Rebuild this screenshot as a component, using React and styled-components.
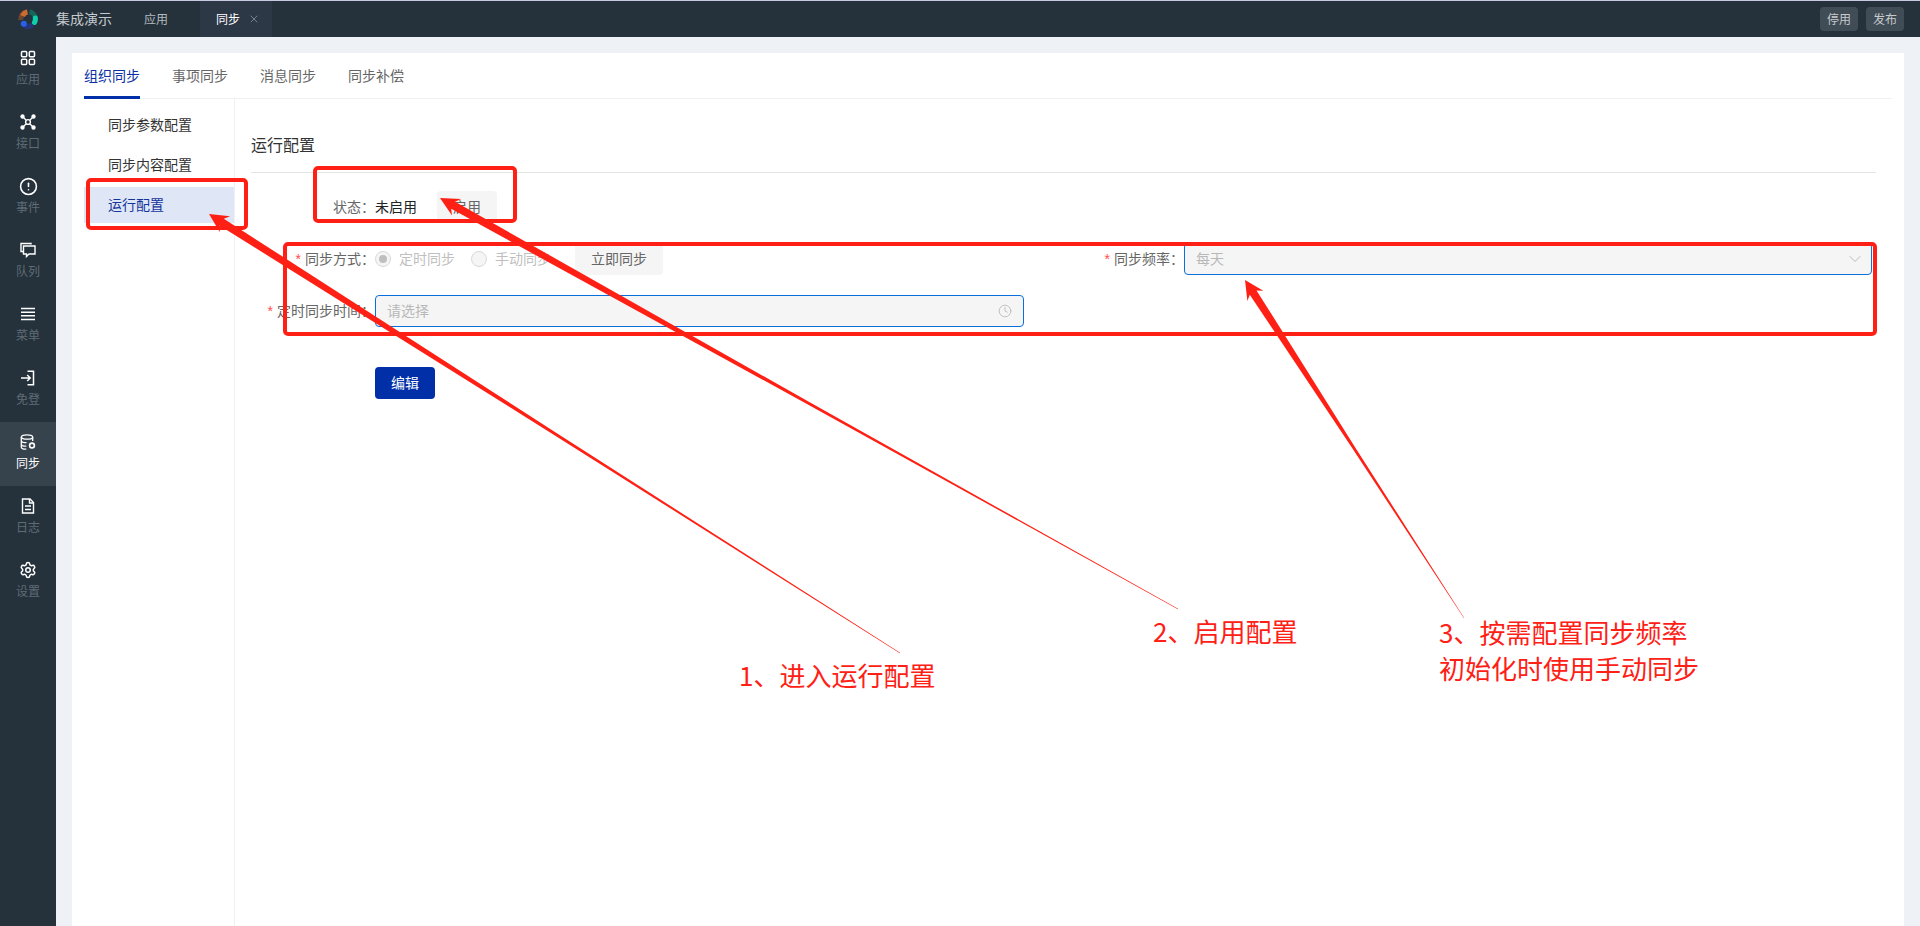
import React from 'react';
import styled, { createGlobalStyle } from 'styled-components';
import { ChevronDown, CircleAlert, Clock, Settings, X } from 'lucide-react';

const GlobalStyle = createGlobalStyle`
  html, body {
    margin: 0;
    padding: 0;
    background: #eef1f5;
  }
  body {
    font-family: "Noto Sans CJK SC", "Noto Sans", sans-serif;
    font-size: 14px;
    color: #333;
  }
  * {
    box-sizing: border-box;
  }
`;

const Page = styled.div`
  position: relative;
  display: flex;
  flex-direction: column;
  width: 1920px;
  height: 926px;
  overflow: hidden;
`;

const TopBar = styled.header`
  display: flex;
  align-items: stretch;
  height: 37px;
  flex-shrink: 0;
  padding-left: 18px;
  padding-right: 16px;
  background: #25323c;
  border-top: 1px solid #c9c9e2;
`;

const Logo = styled.svg`
  align-self: center;
  width: 20px;
  height: 20px;
  margin-right: 18px;
`;

const AppTitle = styled.div`
  display: flex;
  align-items: center;
  width: 56px;
  margin-right: 16px;
  padding-bottom: 2px;
  font-size: 14px;
  color: #c6cacd;
`;

const TopTab = styled.div`
  display: flex;
  align-items: center;
  gap: 8px;
  margin-right: 16px;
  padding: 0 ${(p) => (p.$active ? '12px' : '16px')} 1px 16px;
  font-size: 12px;
  color: ${(p) => (p.$active ? '#fff' : '#b4babe')};
  background: ${(p) => (p.$active ? '#2c3846' : 'transparent')};
  svg {
    color: #77818a;
  }
`;

const TopActions = styled.div`
  display: flex;
  align-items: center;
  gap: 8px;
  margin-left: auto;
`;

const TopButton = styled.div`
  display: flex;
  align-items: center;
  justify-content: center;
  width: 38px;
  height: 24px;
  padding-bottom: 1px;
  font-size: 12px;
  color: #c6cacd;
  background: #414d56;
  border-radius: 4px;
`;

const Layout = styled.div`
  display: flex;
  flex: 1;
  min-height: 0;
`;

const Sidebar = styled.nav`
  display: flex;
  flex-direction: column;
  width: 56px;
  flex-shrink: 0;
  padding-top: 1px;
  background: #25323c;
`;

const NavItem = styled.div`
  display: flex;
  flex-direction: column;
  align-items: center;
  height: 64px;
  padding-top: 12px;
  color: #fff;
  background: ${(p) => (p.$active ? '#36424c' : 'transparent')};
`;

const NavIcon = styled.span`
  display: flex;
  align-items: center;
  justify-content: center;
  width: 16px;
  height: 16px;
  svg {
    flex-shrink: 0;
  }
  svg:not(.lucide) {
    width: 16px;
    height: 16px;
  }
`;

const NavLabel = styled.span`
  margin-top: 5px;
  font-size: 12px;
  line-height: 16px;
  color: ${(p) => (p.$active ? '#fff' : '#5f6b74')};
`;

const Main = styled.main`
  flex: 1;
  min-width: 0;
  padding: 16px 16px 0;
`;

const Card = styled.section`
  display: flex;
  flex-direction: column;
  height: 100%;
  padding: 0 12px;
  background: #fff;
`;

const Tabs = styled.div`
  display: flex;
  gap: 32px;
  height: 46px;
  flex-shrink: 0;
  border-bottom: 1px solid #f0f0f0;
`;

const Tab = styled.div`
  position: relative;
  display: flex;
  align-items: center;
  height: 46px;
  padding-bottom: 2px;
  font-size: 14px;
  color: ${(p) => (p.$active ? '#0b2fa3' : '#666')};
  &::after {
    content: '';
    display: ${(p) => (p.$active ? 'block' : 'none')};
    position: absolute;
    left: 0;
    right: 0;
    bottom: 0;
    height: 3px;
    background: #002fa7;
  }
`;

const Content = styled.div`
  display: flex;
  flex: 1;
  min-height: 0;
`;

const SideMenu = styled.ul`
  display: flex;
  flex-direction: column;
  gap: 4px;
  width: 151px;
  flex-shrink: 0;
  margin: 0;
  padding: 8px 0 0;
  list-style: none;
  border-right: 1px solid #f0f0f0;
`;

const SideMenuItem = styled.li`
  display: flex;
  align-items: center;
  height: 36px;
  padding: 0 0 2px 24px;
  font-size: 14px;
  color: ${(p) => (p.$active ? '#15359d' : '#333')};
  background: ${(p) => (p.$active ? '#dfe7f6' : 'transparent')};
`;

const Pane = styled.div`
  flex: 1;
  min-width: 0;
  padding: 0 16px;
`;

const PaneTitle = styled.h2`
  margin: 0 0 18px;
  padding: 33px 0 16px;
  font-size: 16px;
  font-weight: 400;
  line-height: 24px;
  color: #333;
  border-bottom: 1px solid #e4e4e4;
`;

const FormRow = styled.div`
  display: grid;
  grid-template-columns: 773px 812px;
  column-gap: 36px;
  margin-bottom: 20px;
`;

const Field = styled.div`
  display: flex;
  align-items: center;
  height: 32px;
`;

const Label = styled.label`
  display: block;
  width: 124px;
  flex-shrink: 0;
  padding-bottom: 2px;
  text-align: right;
  color: #666;
  white-space: nowrap;
`;

const Required = styled.span`
  margin-right: 4px;
  font-family: "Liberation Sans", sans-serif;
  color: #ff4d4f;
`;

const StatusValue = styled.span`
  padding-bottom: 2px;
  color: #222;
`;

const GhostButton = styled.div`
  display: flex;
  align-items: center;
  justify-content: center;
  width: ${(p) => p.$width}px;
  height: 32px;
  margin-left: ${(p) => p.$gap}px;
  padding-bottom: 2px;
  color: #666;
  background: #f5f5f5;
  border-radius: 4px;
`;

const RadioOption = styled.div`
  display: flex;
  align-items: center;
  gap: 8px;
  margin-right: 16px;
  padding-bottom: 2px;
  color: #bfbfbf;
`;

const RadioDot = styled.span`
  display: flex;
  align-items: center;
  justify-content: center;
  width: 16px;
  height: 16px;
  margin-top: 2px;
  background: #f5f5f5;
  border: 1px solid #d9d9d9;
  border-radius: 50%;
  &::after {
    content: '';
    display: ${(p) => (p.$checked ? 'block' : 'none')};
    width: 8px;
    height: 8px;
    background: #bfbfbf;
    border-radius: 50%;
  }
`;

const Control = styled.div`
  display: flex;
  flex: 1;
  align-items: center;
  justify-content: space-between;
  height: 32px;
  padding: 0 11px 2px 11px;
  color: #b8b8b8;
  background: #f5f5f5;
  border: 1px solid #0a6fdc;
  border-radius: 4px;
  svg {
    margin-top: 2px;
    color: #bababa;
  }
`;

const SelectArrow = styled(ChevronDown)`
  margin-right: -5px;
`;

const PrimaryButton = styled.div`
  display: flex;
  align-items: center;
  justify-content: center;
  width: 60px;
  height: 32px;
  margin: 40px 0 0 124px;
  padding-bottom: 2px;
  color: #fff;
  background: #002fa7;
  border-radius: 4px;
`;

const Annotations = styled.svg`
  position: absolute;
  top: 0;
  left: 0;
  width: 1920px;
  height: 926px;
  pointer-events: none;
`;

const Callout = styled.div`
  position: absolute;
  left: ${(p) => p.$x}px;
  top: ${(p) => p.$y}px;
  font-size: 26px;
  line-height: 36px;
  color: #ff2015;
  white-space: nowrap;
`;

const navItems = [
  {
    label: '应用',
    icon: (
      <svg viewBox="0 0 16 16" fill="none" stroke="currentColor" strokeWidth="1.5">
        <rect x="1.5" y="1.5" width="5.2" height="5.2" rx="1" />
        <rect x="9.3" y="1.5" width="5.2" height="5.2" rx="1" />
        <rect x="1.5" y="9.3" width="5.2" height="5.2" rx="1" />
        <rect x="9.3" y="9.3" width="5.2" height="5.2" rx="1" />
      </svg>
    ),
  },
  {
    label: '接口',
    icon: (
      <svg viewBox="0 0 16 16" fill="none" stroke="currentColor" strokeWidth="1.4">
        <path d="M3 3 6 6M13 3 10 6M3 13 6 10M13 13 10 10" />
        <circle cx="8" cy="8" r="2.4" />
        <circle cx="2.5" cy="2.5" r="1.5" fill="currentColor" />
        <circle cx="13.5" cy="2.5" r="1.5" fill="currentColor" />
        <circle cx="2.5" cy="13.5" r="1.5" fill="currentColor" />
        <circle cx="13.5" cy="13.5" r="1.5" fill="currentColor" />
      </svg>
    ),
  },
  { label: '事件', icon: <CircleAlert size={19} strokeWidth={2} /> },
  {
    label: '队列',
    icon: (
      <svg viewBox="0 0 16 16" fill="none" stroke="currentColor" strokeWidth="1.4">
        <path d="M11 2.5V1.5H1v8h2" />
        <path d="M3.5 4H15v8H9l-2.5 2.5V12h-3z" />
      </svg>
    ),
  },
  {
    label: '菜单',
    icon: (
      <svg viewBox="0 0 16 16" fill="none" stroke="currentColor" strokeWidth="1.5">
        <path d="M1 2.5h14M1 6.2h14M1 9.8h14M1 13.5h14" />
      </svg>
    ),
  },
  {
    label: '免登',
    icon: (
      <svg viewBox="0 0 16 16" fill="none" stroke="currentColor" strokeWidth="1.5">
        <path d="M7.5 1.2H13.5V14.8H7.5" />
        <path d="M1 8h9M7.2 5 10.2 8 7.2 11" />
      </svg>
    ),
  },
  {
    label: '同步',
    active: true,
    icon: (
      <svg viewBox="0 0 16 16" fill="none" stroke="currentColor" strokeWidth="1.3">
        <ellipse cx="7" cy="3" rx="5.7" ry="2.2" />
        <path d="M1.3 3v10c0 1.2 2.2 2.2 5 2.2M12.7 3v4M1.3 6.5c0 1.2 2.4 2.2 5.2 2.2M1.3 10c0 1.2 2.2 2.2 5 2.2" />
        <circle cx="12" cy="11.5" r="2.4" strokeWidth="1.6" />
      </svg>
    ),
  },
  {
    label: '日志',
    icon: (
      <svg viewBox="0 0 16 16" fill="none" stroke="currentColor" strokeWidth="1.4">
        <path d="M2.5 1H10l3.5 3.5V15h-11z" />
        <path d="M9.5 1v4h4M5 8h6M5 11.5h6" />
      </svg>
    ),
  },
  { label: '设置', icon: <Settings size={18} strokeWidth={2} /> },
];

// tapered arrow: hair thin at the tail, wide at the head
const arrowPoints = ([tx, ty], [hx, hy]) => {
  const len = Math.hypot(tx - hx, ty - hy);
  const ux = (tx - hx) / len;
  const uy = (ty - hy) / len;
  const nx = -uy;
  const ny = ux;
  const at = (along, side) => `${(hx + ux * along + nx * side).toFixed(1)},${(hy + uy * along + ny * side).toFixed(1)}`;
  return [
    at(0, 0),
    at(19, 9.5),
    at(15, 4),
    at(len * 0.5, 1.4),
    at(len, 0.25),
    at(len, -0.25),
    at(len * 0.5, -1.4),
    at(15, -4),
    at(19, -9.5),
  ].join(' ');
};

const boxes = [
  { x: 88, y: 180, width: 158, height: 48 },
  { x: 315, y: 168, width: 200, height: 53 },
  { x: 285, y: 244, width: 1590, height: 90 },
];

const arrows = [
  { tail: [900, 653], head: [209, 214] },
  { tail: [1178, 609], head: [440, 198] },
  { tail: [1464, 618], head: [1245, 280] },
];

const App = () => {
  return (
    <Page>
      <GlobalStyle />
      <TopBar>
        <Logo viewBox="0 0 20 20" fill="none">
          <defs>
            <filter id="logo-soft" x="-20%" y="-20%" width="140%" height="140%">
              <feGaussianBlur stdDeviation="0.6" />
            </filter>
          </defs>
          <g filter="url(#logo-soft)" strokeWidth="5">
            <path d="M2.8 11A7.4 7.4 0 0 1 9 2.7" stroke="#6b4630" />
            <path d="M4.6 7A6.6 6.6 0 0 1 9.5 3" stroke="#cf6a2e" />
            <path d="M11.5 2.8A7.4 7.4 0 0 1 17.4 10" stroke="#14665a" />
            <path d="M17.4 9A7.4 7.4 0 0 1 16.5 13.5" stroke="#0fd0ac" strokeLinecap="round" />
            <path d="M6 16.4A7.4 7.4 0 0 0 14.5 15.8" stroke="#28347a" />
            <circle cx="5.8" cy="14.8" r="3" fill="#2a5fe8" />
          </g>
        </Logo>
        <AppTitle>集成演示</AppTitle>
        <TopTab>应用</TopTab>
        <TopTab $active>
          同步
          <X size={12} />
        </TopTab>
        <TopActions>
          <TopButton>停用</TopButton>
          <TopButton>发布</TopButton>
        </TopActions>
      </TopBar>
      <Layout>
        <Sidebar>
          {navItems.map((item) => (
            <NavItem key={item.label} $active={item.active}>
              <NavIcon>{item.icon}</NavIcon>
              <NavLabel $active={item.active}>{item.label}</NavLabel>
            </NavItem>
          ))}
        </Sidebar>
        <Main>
          <Card>
            <Tabs>
              <Tab $active>组织同步</Tab>
              <Tab>事项同步</Tab>
              <Tab>消息同步</Tab>
              <Tab>同步补偿</Tab>
            </Tabs>
            <Content>
              <SideMenu>
                <SideMenuItem>同步参数配置</SideMenuItem>
                <SideMenuItem>同步内容配置</SideMenuItem>
                <SideMenuItem $active>运行配置</SideMenuItem>
              </SideMenu>
              <Pane>
                <PaneTitle>运行配置</PaneTitle>
                <FormRow>
                  <Field>
                    <Label>状态：</Label>
                    <StatusValue>未启用</StatusValue>
                    <GhostButton $width={60} $gap={20}>启用</GhostButton>
                  </Field>
                </FormRow>
                <FormRow>
                  <Field>
                    <Label><Required>*</Required>同步方式：</Label>
                    <RadioOption>
                      <RadioDot $checked />
                      定时同步
                    </RadioOption>
                    <RadioOption>
                      <RadioDot />
                      手动同步
                    </RadioOption>
                    <GhostButton $width={88} $gap={8}>立即同步</GhostButton>
                  </Field>
                  <Field>
                    <Label><Required>*</Required>同步频率：</Label>
                    <Control>
                      每天
                      <SelectArrow size={20} strokeWidth={1.2} />
                    </Control>
                  </Field>
                </FormRow>
                <FormRow>
                  <Field>
                    <Label><Required>*</Required>定时同步时间：</Label>
                    <Control>
                      请选择
                      <Clock size={14} strokeWidth={1.5} />
                    </Control>
                  </Field>
                </FormRow>
                <PrimaryButton>编辑</PrimaryButton>
              </Pane>
            </Content>
          </Card>
        </Main>
      </Layout>
      <Annotations viewBox="0 0 1920 926">
        {boxes.map((box) => (
          <rect key={box.x} {...box} rx="3" fill="none" stroke="#ff2015" strokeWidth="4" />
        ))}
        {arrows.map((arrow) => (
          <polygon key={arrow.head[0]} points={arrowPoints(arrow.tail, arrow.head)} fill="#ff2015" />
        ))}
      </Annotations>
      <Callout $x={739} $y={657}>1、进入运行配置</Callout>
      <Callout $x={1153} $y={613}>2、启用配置</Callout>
      <Callout $x={1439} $y={614}>3、按需配置同步频率<br />初始化时使用手动同步</Callout>
    </Page>
  );
};

export default App;
